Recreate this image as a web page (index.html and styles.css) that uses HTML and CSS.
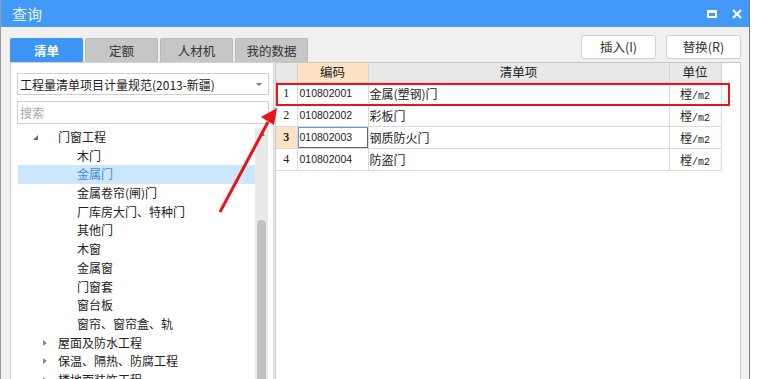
FILE: index.html
```html
<!DOCTYPE html>
<html lang="zh">
<head>
<meta charset="utf-8">
<title>查询</title>
<link rel="stylesheet" href="styles.css">
</head>
<body>
<div class="window">
  <div class="titlebar">
    <span class="title">查询</span>
    <div class="winctl">
      <span class="max"></span>
      <svg class="close" width="10" height="10" viewBox="0 0 10 10"><path d="M1 1 L9 9 M9 1 L1 9" stroke="#fff" stroke-width="2.2" fill="none"/></svg>
    </div>
  </div>
  <div class="content">
    <div class="toprow">
      <div class="tabs">
        <div class="tab active">清单</div>
        <div class="tab">定额</div>
        <div class="tab">人材机</div>
        <div class="tab">我的数据</div>
      </div>
      <div class="actions">
        <button class="btn">插入(I)</button>
        <button class="btn">替换(R)</button>
      </div>
    </div>
    <div class="main">
      <div class="left">
        <div class="select"><span>工程量清单项目计量规范(2013-新疆)</span><span class="caret"></span></div>
        <div class="search">搜索</div>
        <div class="treewrap">
          <div class="tree">
            <div class="row l1"><span class="tri-open"></span>门窗工程</div>
            <div class="row l2">木门</div>
            <div class="row l2 sel">金属门</div>
            <div class="row l2">金属卷帘(闸)门</div>
            <div class="row l2">厂库房大门、特种门</div>
            <div class="row l2">其他门</div>
            <div class="row l2">木窗</div>
            <div class="row l2">金属窗</div>
            <div class="row l2">门窗套</div>
            <div class="row l2">窗台板</div>
            <div class="row l2">窗帘、窗帘盒、轨</div>
            <div class="row l1"><span class="tri-closed"></span>屋面及防水工程</div>
            <div class="row l1"><span class="tri-closed"></span>保温、隔热、防腐工程</div>
            <div class="row l1"><span class="tri-closed"></span>楼地面装饰工程</div>
          </div>
          <div class="scroll"><span class="up"></span><div class="thumb"></div></div>
        </div>
      </div>
      <div class="right">
        <table class="grid">
          <colgroup><col class="c0"><col class="c1"><col class="c2"><col class="c3"></colgroup>
          <thead>
            <tr><th></th><th class="hl">编码</th><th>清单项</th><th>单位</th></tr>
          </thead>
          <tbody>
            <tr><td class="rn">1</td><td class="code">010802001</td><td class="name">金属(塑钢)门</td><td class="unit">樘<span class="u">/m2</span></td></tr>
            <tr><td class="rn">2</td><td class="code">010802002</td><td class="name">彩板门</td><td class="unit">樘<span class="u">/m2</span></td></tr>
            <tr><td class="rn cur">3</td><td class="code focus">010802003</td><td class="name">钢质防火门</td><td class="unit">樘<span class="u">/m2</span></td></tr>
            <tr><td class="rn">4</td><td class="code">010802004</td><td class="name">防盗门</td><td class="unit">樘<span class="u">/m2</span></td></tr>
          </tbody>
        </table>
      </div>
    </div>
  </div>
</div>
<div class="annot-box"></div>
<svg class="annot-arrow" width="773" height="379" viewBox="0 0 773 379">
  <line x1="220" y1="212" x2="268" y2="122" stroke="#e8141c" stroke-width="3"/>
  <polygon points="277,108 261,117 274,125" fill="#e8141c"/>
</svg>
</body>
</html>
```

FILE: styles.css
```css
* { box-sizing: border-box; }
html, body { margin: 0; padding: 0; }
body {
  width: 773px;
  height: 379px;
  background: #ffffff;
  overflow: hidden;
  position: relative;
  font-family: "Noto Sans CJK SC", "Liberation Sans", sans-serif;
  font-size: 12px;
  color: #222;
}
.window {
  width: 750px;
  height: 379px;
  background: #f0f0f0;
  border-left: 1px solid #9a9a9a;
  border-right: 1px solid #7a7a7a;
  display: flex;
  flex-direction: column;
}
.titlebar {
  height: 27px;
  background: #4299f8;
  display: flex;
  align-items: center;
  justify-content: space-between;
  padding: 0 7px 0 11px;
  flex: none;
}
.title {
  color: #e8f2fe;
  font-size: 15px;
  line-height: 27px;
}
.winctl {
  display: flex;
  align-items: center;
  gap: 15px;
}
.max {
  width: 10px;
  height: 8px;
  border: 2px solid #fff;
  border-top-width: 3px;
}
.close { display: block; }
.content {
  flex: 1;
  display: flex;
  flex-direction: column;
  padding: 0 8px 0 9px;
  min-height: 0;
}
.toprow {
  height: 35px;
  display: flex;
  justify-content: space-between;
  align-items: flex-end;
  flex: none;
}
.tabs {
  display: flex;
  gap: 2px;
}
.tab {
  width: 73px;
  height: 24px;
  background: #c6c6c6;
  border: 1px solid #bababa;
  border-bottom: none;
  border-radius: 2px 2px 0 0;
  text-align: center;
  line-height: 23px;
  font-size: 12.5px;
  color: #333;
}
.tab.active {
  background: #3d96f5;
  border-color: #3d96f5;
  color: #fff;
  font-weight: bold;
}
.actions {
  align-self: flex-start;
  margin-top: 8px;
  display: flex;
  gap: 10px;
}
.btn {
  width: 75px;
  height: 24px;
  background: #fff;
  border: 1px solid #d0d0d0;
  border-radius: 3px;
  font-family: "Noto Sans CJK SC", "Liberation Sans", sans-serif;
  font-size: 12.5px;
  color: #333;
  padding: 0;
  line-height: 22px;
}
.main {
  flex: 1;
  display: flex;
  gap: 1px;
  min-height: 0;
}
.left {
  width: 264px;
  background: #fff;
  border: 1px solid #d2d2d2;
  border-bottom: none;
  padding: 10px 4px 0 6px;
  display: flex;
  flex-direction: column;
  min-height: 0;
}
.select {
  height: 22px;
  border: 1px solid #cfcfcf;
  display: flex;
  align-items: center;
  justify-content: space-between;
  padding: 0 6px 0 2px;
  font-size: 12px;
  color: #222;
  flex: none;
}
.caret {
  width: 0;
  height: 0;
  border-left: 3px solid transparent;
  border-right: 3px solid transparent;
  border-top: 3px solid #777;
}
.search {
  margin-top: 6px;
  height: 23px;
  border: 1px solid #cfcfcf;
  padding-left: 2px;
  line-height: 21px;
  color: #a8a8a8;
  font-size: 12px;
  flex: none;
}
.treewrap {
  margin-top: 4px;
  flex: 1;
  display: flex;
  padding-left: 1px;
  min-height: 0;
  overflow: hidden;
}
.tree {
  width: 237px;
  flex: none;
}
.row {
  height: 18.7px;
  line-height: 18.7px;
  font-size: 12px;
  color: #222;
  white-space: nowrap;
  position: relative;
}
.row.l1 { padding-left: 40px; }
.row.l2 { padding-left: 59px; }
.row.sel {
  background: #cce6fb;
  color: #3b8be0;
}
.tri-open {
  position: absolute;
  left: 15px;
  top: 7px;
  width: 0;
  height: 0;
  border-left: 5px solid transparent;
  border-bottom: 5px solid #6a6a6a;
}
.tri-closed {
  position: absolute;
  left: 25px;
  top: 6px;
  width: 0;
  height: 0;
  border-top: 3.5px solid transparent;
  border-bottom: 3.5px solid transparent;
  border-left: 4px solid #8a8a8a;
}
.scroll {
  width: 13px;
  background: #e9e9e9;
  flex: none;
  display: flex;
  flex-direction: column;
  align-items: center;
  padding-top: 4px;
}
.up {
  width: 0;
  height: 0;
  border-left: 3px solid transparent;
  border-right: 3px solid transparent;
  border-bottom: 4px solid #707070;
}
.thumb {
  margin-top: 84px;
  width: 9px;
  flex: 1;
  background: #c1c1c1;
  border-radius: 5px 5px 0 0;
}
.right {
  flex: 1;
  background: #fff;
  border: 1px solid #c8c8c8;
  border-bottom: none;
}
.grid {
  border-collapse: collapse;
  table-layout: fixed;
  width: 445px;
}
.c0 { width: 21px; }
.c1 { width: 71px; }
.c2 { width: 301px; }
.c3 { width: 52px; }
.grid th {
  height: 19px;
  background: #e8e8e8;
  font-weight: normal;
  font-size: 12.5px;
  color: #222;
  border-right: 1px solid #d4d4d4;
  border-bottom: 1px solid #d4d4d4;
  padding: 0;
  line-height: 18px;
}
.grid th.hl { background: #fde3c3; }
.grid td {
  height: 22px;
  border-right: 1px solid #dadada;
  border-bottom: 1px solid #dadada;
  padding: 0 2px;
  white-space: nowrap;
  overflow: hidden;
}
.grid td.rn {
  text-align: center;
  font-family: "Liberation Serif", serif;
  font-size: 12px;
  color: #222;
  padding: 0;
}
.grid td.rn.cur {
  background: #fde3c3;
  font-weight: bold;
}
.grid td.code {
  font-family: "Liberation Sans", sans-serif;
  font-size: 10.5px;
  color: #222;
  padding-left: 2px;
}
.grid td.focus {
  box-shadow: inset 1px 1px 0 #5a9be6, inset -1px -1px 0 #666;
}
.grid td.name {
  font-size: 12px;
  padding-left: 1px;
}
.grid td.unit {
  text-align: center;
  font-size: 12px;
}
.u {
  font-family: "Liberation Mono", monospace;
  font-size: 10px;
}
.annot-box {
  position: absolute;
  left: 276px;
  top: 83px;
  width: 454px;
  height: 23px;
  border: 2px solid #e8141c;
}
.annot-arrow {
  position: absolute;
  left: 0;
  top: 0;
  pointer-events: none;
}
```
